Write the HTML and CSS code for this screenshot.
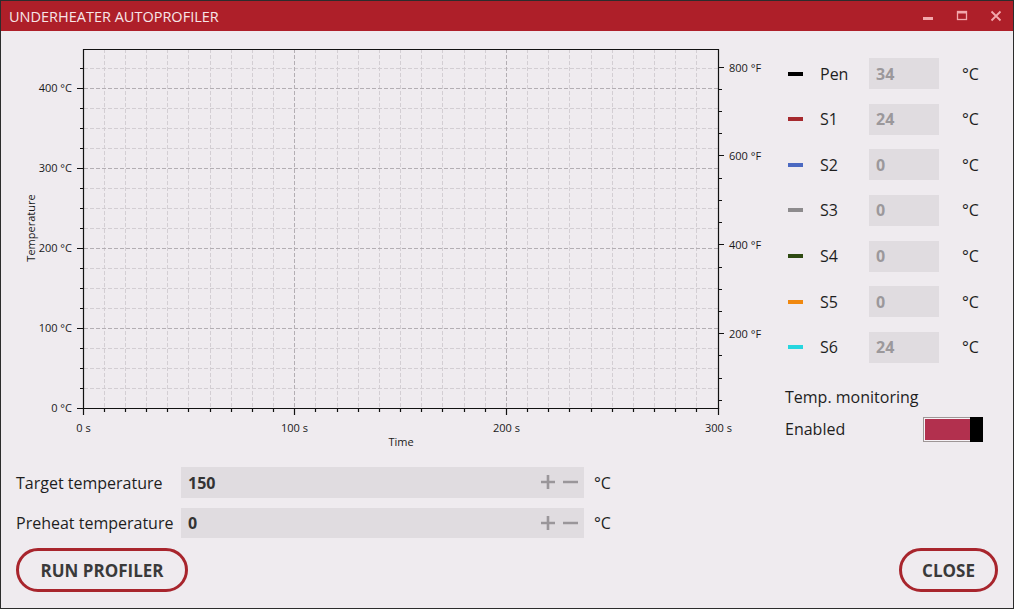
FILE: index.html
```html
<!DOCTYPE html>
<html>
<head>
<meta charset="utf-8">
<title>Underheater Autoprofiler</title>
<link rel="stylesheet" href="styles.css">
</head>
<body>
<div class="window">
  <header class="titlebar">
    <span class="title">UNDERHEATER AUTOPROFILER</span>
    <div class="controls">
      <span class="ctl"><svg width="12" height="12" viewBox="0 0 12 12"><rect x="1" y="7" width="10" height="3" fill="currentColor"/></svg></span>
      <span class="ctl"><svg width="12" height="12" viewBox="0 0 12 12"><rect x="1.5" y="1.5" width="9" height="8" fill="none" stroke="currentColor" stroke-width="1.3"/><rect x="1" y="1" width="10" height="2.5" fill="currentColor"/></svg></span>
      <span class="ctl"><svg width="12" height="12" viewBox="0 0 12 12"><path d="M1.5 1.5L10.5 10.5M10.5 1.5L1.5 10.5" stroke="currentColor" stroke-width="1.8"/></svg></span>
    </div>
  </header>
  <main class="content">
    <section class="top">
      <svg class="chart" width="770" height="430" viewBox="1 31 770 430">
        <g class="grid-minor">
          <path d="M104.5 49V408M125.5 49V408M146.5 49V408M167.5 49V408M188.5 49V408M210.5 49V408M231.5 49V408M252.5 49V408M273.5 49V408M315.5 49V408M337.5 49V408M358.5 49V408M379.5 49V408M400.5 49V408M421.5 49V408M442.5 49V408M464.5 49V408M485.5 49V408M527.5 49V408M548.5 49V408M569.5 49V408M591.5 49V408M612.5 49V408M633.5 49V408M654.5 49V408M675.5 49V408M696.5 49V408"/>
          <path d="M84 388.5H718M84 368.5H718M84 348.5H718M84 308.5H718M84 288.5H718M84 268.5H718M84 228.5H718M84 208.5H718M84 188.5H718M84 148.5H718M84 128.5H718M84 108.5H718M84 68.5H718"/>
        </g>
        <g class="grid-major">
          <path d="M294.5 49V408M506.5 49V408"/>
          <path d="M84 328.5H718M84 248.5H718M84 168.5H718M84 88.5H718"/>
        </g>
        <g class="axis">
          <path d="M83.5 49.5H718.5V408.5H83.5Z"/>
          <path d="M80 388.5H83M80 368.5H83M80 348.5H83M77 328.5H83M80 308.5H83M80 288.5H83M80 268.5H83M77 248.5H83M80 228.5H83M80 208.5H83M80 188.5H83M77 168.5H83M80 148.5H83M80 128.5H83M80 108.5H83M77 88.5H83M80 68.5H83M77 408.5H83"/>
          <path d="M83.5 408V415M104.5 408V412M125.5 408V412M146.5 408V412M167.5 408V412M188.5 408V412M210.5 408V412M231.5 408V412M252.5 408V412M273.5 408V412M294.5 408V415M315.5 408V412M337.5 408V412M358.5 408V412M379.5 408V412M400.5 408V412M421.5 408V412M442.5 408V412M464.5 408V412M485.5 408V412M506.5 408V415M527.5 408V412M548.5 408V412M569.5 408V412M591.5 408V412M612.5 408V412M633.5 408V412M654.5 408V412M675.5 408V412M696.5 408V412M718.5 408V415"/>
          <path d="M718 400.5H722M718 378.5H722M718 355.5H722M718 333.5H724M718 311.5H722M718 289.5H722M718 267.5H722M718 244.5H724M718 222.5H722M718 200.5H722M718 178.5H722M718 155.5H724M718 133.5H722M718 111.5H722M718 89.5H722M718 67.5H724"/>
        </g>
        <g class="labels">
          <text x="72" y="92" text-anchor="end">400 °C</text>
          <text x="72" y="172" text-anchor="end">300 °C</text>
          <text x="72" y="252" text-anchor="end">200 °C</text>
          <text x="72" y="332" text-anchor="end">100 °C</text>
          <text x="72" y="412" text-anchor="end">0 °C</text>
          <text x="729" y="72">800 °F</text>
          <text x="729" y="160">600 °F</text>
          <text x="729" y="249">400 °F</text>
          <text x="729" y="338">200 °F</text>
          <text x="83.5" y="432" text-anchor="middle">0 s</text>
          <text x="294.5" y="432" text-anchor="middle">100 s</text>
          <text x="506.5" y="432" text-anchor="middle">200 s</text>
          <text x="718.5" y="432" text-anchor="middle">300 s</text>
          <text x="401" y="446" text-anchor="middle">Time</text>
          <text x="35" y="228" text-anchor="middle" transform="rotate(-90 35 228)">Temperature</text>
        </g>
      </svg>
      <aside class="side">
        <ul class="legend">
          <li class="row"><span class="swatch sw-pen"></span><span class="name">Pen</span><span class="readout">34</span><span class="unit">°C</span></li>
          <li class="row"><span class="swatch sw-s1"></span><span class="name">S1</span><span class="readout">24</span><span class="unit">°C</span></li>
          <li class="row"><span class="swatch sw-s2"></span><span class="name">S2</span><span class="readout">0</span><span class="unit">°C</span></li>
          <li class="row"><span class="swatch sw-s3"></span><span class="name">S3</span><span class="readout">0</span><span class="unit">°C</span></li>
          <li class="row"><span class="swatch sw-s4"></span><span class="name">S4</span><span class="readout">0</span><span class="unit">°C</span></li>
          <li class="row"><span class="swatch sw-s5"></span><span class="name">S5</span><span class="readout">0</span><span class="unit">°C</span></li>
          <li class="row"><span class="swatch sw-s6"></span><span class="name">S6</span><span class="readout">24</span><span class="unit">°C</span></li>
        </ul>
        <div class="monitor-title">Temp. monitoring</div>
        <div class="monitor-row">
          <span>Enabled</span>
          <span class="toggle"><span class="toggle-fill"></span><span class="toggle-knob"></span></span>
        </div>
      </aside>
    </section>
    <section class="form">
      <div class="field">
        <label class="field-label">Target temperature</label>
        <div class="spin"><span class="spin-value">150</span>
          <span class="spin-btns"><svg width="40" height="16" viewBox="0 0 40 16"><path d="M8 1V15M1 8H15M23 8H38" stroke="#9a969a" stroke-width="2.6"/></svg></span>
        </div>
        <span class="field-unit">°C</span>
      </div>
      <div class="field">
        <label class="field-label">Preheat temperature</label>
        <div class="spin"><span class="spin-value">0</span>
          <span class="spin-btns"><svg width="40" height="16" viewBox="0 0 40 16"><path d="M8 1V15M1 8H15M23 8H38" stroke="#9a969a" stroke-width="2.6"/></svg></span>
        </div>
        <span class="field-unit">°C</span>
      </div>
    </section>
    <footer class="actions">
      <button class="pill pill-run">RUN PROFILER</button>
      <button class="pill pill-close">CLOSE</button>
    </footer>
  </main>
</div>
</body>
</html>
```
FILE: styles.css
```css
html, body {
  margin: 0;
  padding: 0;
  background: #efebef;
}
body {
  font-family: "Open Sans", "Noto Sans", sans-serif;
  color: #1e1e1e;
}
.window {
  width: 1014px;
  height: 609px;
  box-sizing: border-box;
  border: 1px solid #2c2c2c;
  background: #efebef;
  display: flex;
  flex-direction: column;
  overflow: hidden;
}
.titlebar {
  height: 30px;
  flex: none;
  background: #ae1f29;
  display: flex;
  align-items: center;
  justify-content: space-between;
  padding-left: 8px;
  color: #f7e6e8;
  font-size: 14.5px;
  box-sizing: border-box;
}
.controls {
  display: flex;
  height: 100%;
}
.ctl {
  width: 34px;
  display: flex;
  align-items: center;
  justify-content: center;
  color: #f2a8ac;
}
.content {
  flex: 1;
  display: flex;
  flex-direction: column;
}
.top {
  display: flex;
  height: 430px;
  flex: none;
}
.chart {
  flex: none;
  display: block;
}
.grid-minor path {
  fill: none;
  stroke: #d3ced3;
  stroke-width: 1;
  stroke-dasharray: 4 2;
}
.grid-major path {
  fill: none;
  stroke: #b3aeb3;
  stroke-width: 1;
  stroke-dasharray: 4 2;
}
.axis path {
  fill: none;
  stroke: #111;
  stroke-width: 1.2;
}
.labels text {
  font-family: "Open Sans", "Noto Sans", sans-serif;
  font-size: 11px;
  fill: #1a1a1a;
}
.side {
  margin-left: 14px;
  padding-top: 27px;
  flex: 1;
  font-size: 16px;
}
.legend {
  list-style: none;
  margin: 0;
  padding: 0;
  display: flex;
  flex-direction: column;
  gap: 14.67px;
}
.row {
  display: flex;
  align-items: center;
  height: 31px;
}
.swatch {
  width: 15px;
  height: 4px;
  margin-left: 3px;
  margin-right: 17px;
}
.sw-pen { background: #000; }
.sw-s1 { background: #a6292e; }
.sw-s2 { background: #4b69c1; }
.sw-s3 { background: #8d8b8d; }
.sw-s4 { background: #2e4a12; }
.sw-s5 { background: #f0880f; }
.sw-s6 { background: #26d6df; }
.name {
  width: 49px;
}
.readout {
  width: 70px;
  height: 31px;
  box-sizing: border-box;
  background: #e0dce0;
  padding-left: 7px;
  display: flex;
  align-items: center;
  font-weight: 700;
  color: #9b989b;
}
.unit {
  margin-left: 23px;
}
.monitor-title {
  margin-top: 23px;
  line-height: 22px;
}
.monitor-row {
  margin-top: 9px;
  display: flex;
  align-items: center;
  justify-content: space-between;
  width: 198px;
  height: 25px;
}
.toggle {
  width: 60px;
  height: 25px;
  box-sizing: border-box;
  border: 1px solid #9e9696;
  padding: 1px;
  display: flex;
  background: #f6f2f6;
}
.toggle-fill {
  flex: 1;
  background: #b2304e;
}
.toggle-knob {
  width: 13px;
  margin: -2px -2px -2px 0;
  background: #000;
}
.form {
  padding: 6px 0 0 15px;
  display: flex;
  flex-direction: column;
  gap: 10px;
  font-size: 16px;
}
.field {
  display: flex;
  align-items: center;
  height: 30.5px;
}
.field-label {
  width: 165px;
  padding-top: 1px;
}
.spin {
  width: 403px;
  height: 100%;
  background: #e0dce0;
  display: flex;
  align-items: center;
  justify-content: space-between;
  padding: 0 4px 0 7px;
  box-sizing: border-box;
}
.spin-value {
  font-weight: 700;
  color: #333;
  padding-top: 1px;
}
.spin-btns {
  display: flex;
}
.spin-btns svg {
  display: block;
}
.field-unit {
  margin-left: 10px;
  padding-top: 1px;
}
.actions {
  margin-top: 10px;
  padding: 0 15px;
  display: flex;
  justify-content: space-between;
}
.pill {
  height: 44px;
  box-sizing: border-box;
  border: 3px solid #a8252d;
  border-radius: 22px;
  background: transparent;
  font-family: "Open Sans", "Noto Sans", sans-serif;
  font-weight: 700;
  font-size: 17px;
  color: #3a3a3a;
  padding: 0;
}
.pill-run {
  width: 172px;
}
.pill-close {
  width: 99px;
}
```
